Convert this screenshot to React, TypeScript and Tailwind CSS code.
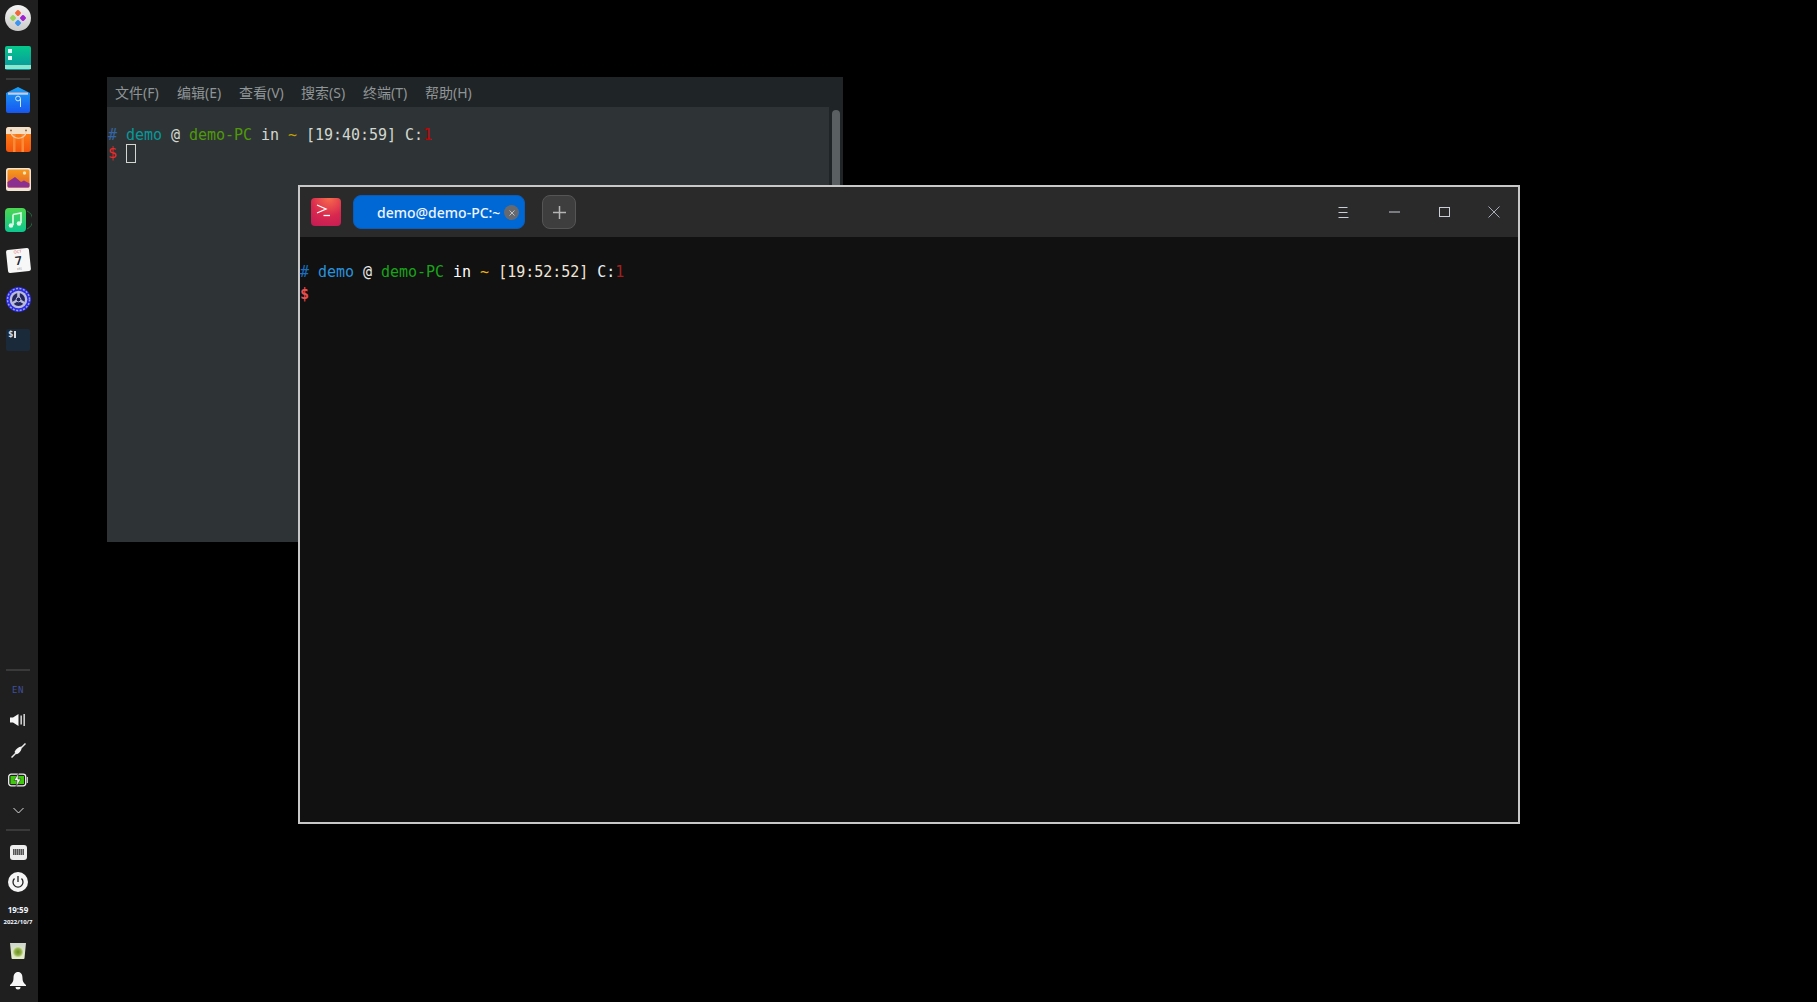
import type { ReactNode } from 'react'

const sans = 'font-["Noto_Sans","Noto_Sans_CJK_SC",sans-serif]'
const mono = 'font-["DejaVu_Sans_Mono",monospace]'

function Slot({ h, children }: { h: string; children: ReactNode }) {
  return <div className={`${h} flex w-full items-center justify-center`}>{children}</div>
}

function Launcher() {
  return (
    <svg width="26" height="26" viewBox="0 0 26 26">
      <defs>
        <linearGradient id="launcher" x1="0" y1="0" x2="0" y2="1">
          <stop offset="0" stopColor="#f4f4f4" />
          <stop offset="1" stopColor="#c9c9c9" />
        </linearGradient>
      </defs>
      <circle cx="13" cy="13" r="13" fill="url(#launcher)" />
      <rect x="10.5" y="5.5" width="5" height="5" rx="1.2" transform="rotate(45 13 8)" fill="#f0683a" />
      <rect x="5.5" y="10.5" width="5" height="5" rx="1.2" transform="rotate(45 8 13)" fill="#9ad35a" />
      <rect x="15.5" y="10.5" width="5" height="5" rx="1.2" transform="rotate(45 18 13)" fill="#a222d0" />
      <rect x="10.5" y="15.5" width="5" height="5" rx="1.2" transform="rotate(45 13 18)" fill="#3a94f0" />
    </svg>
  )
}

function FileTile() {
  return (
    <svg width="26" height="24" viewBox="0 0 26 24">
      <defs>
        <linearGradient id="tile" x1="0" y1="0" x2="0" y2="1">
          <stop offset="0" stopColor="#05c98a" />
          <stop offset="1" stopColor="#0a93a0" />
        </linearGradient>
      </defs>
      <rect width="26" height="24" rx="2" fill="url(#tile)" />
      <rect x="3" y="3" width="4" height="4" fill="#e8fff6" />
      <rect x="3" y="10" width="4" height="4" fill="#e8fff6" />
      <rect y="19" width="26" height="4" fill="#8ce6cc" />
    </svg>
  )
}

function StoreBag() {
  return (
    <svg width="24" height="26" viewBox="0 0 24 26">
      <defs>
        <linearGradient id="store" x1="0" y1="0" x2="0" y2="1">
          <stop offset="0" stopColor="#1aa0f5" />
          <stop offset="1" stopColor="#1756f0" />
        </linearGradient>
      </defs>
      <path d="M0 6 12 0l12 6v18a2 2 0 0 1-2 2H2a2 2 0 0 1-2-2z" fill="url(#store)" />
      <rect x="2" y="5.500" width="20" height="1" fill="#f4b8b8" />
      <rect x="2" y="6.500" width="20" height="1" fill="#f7f7ff" />
      <circle cx="12" cy="11.500" r="2.400" fill="none" stroke="#cfe6ff" strokeWidth="1" />
      <path d="M14.500 11.500V20" fill="none" stroke="#cfe6ff" strokeWidth="1" />
    </svg>
  )
}

function ShopBag() {
  return (
    <svg width="25" height="25" viewBox="0 0 25 25">
      <defs>
        <linearGradient id="shop" x1="0" y1="0" x2="0" y2="1">
          <stop offset="0" stopColor="#ff8a1a" />
          <stop offset="1" stopColor="#f3540c" />
        </linearGradient>
      </defs>
      <rect width="25" height="25" rx="3" fill="url(#shop)" />
      <path d="M0 7V3a3 3 0 0 1 3-3h19a3 3 0 0 1 3 3v4z" fill="#f3dfc8" />
      <rect x="7" y="7" width="2.500" height="18" fill="#fb8a38" />
      <rect x="15.500" y="7" width="2.500" height="18" fill="#fb8a38" />
      <circle cx="5" cy="3.500" r="1" fill="#8f6a4a" />
      <circle cx="20" cy="3.500" r="1" fill="#8f6a4a" />
      <path d="M5 4.500c0 9 15 9 15 0" fill="none" stroke="#f7cfa8" strokeWidth="1.200" />
    </svg>
  )
}

function Photos() {
  return (
    <svg width="25" height="23" viewBox="0 0 25 23">
      <defs>
        <linearGradient id="photo" x1="0" y1="0" x2="0" y2="1">
          <stop offset="0" stopColor="#f79a1c" />
          <stop offset="1" stopColor="#e0602a" />
        </linearGradient>
      </defs>
      <rect width="25" height="23" rx="2.500" fill="#f3e3d3" />
      <rect x="1.500" y="1.500" width="22" height="18" rx="1.500" fill="url(#photo)" />
      <circle cx="18.500" cy="5" r="1.700" fill="#ffe3b0" />
      <path d="M1.500 14 9 9l6 5 3-1.500 5.500 3v2.500a1.500 1.500 0 0 1-1.500 1.500H3a1.500 1.500 0 0 1-1.500-1.500z" fill="#8b2f90" />
    </svg>
  )
}

function Music() {
  return (
    <svg width="27" height="24" viewBox="0 0 27 24">
      <defs>
        <linearGradient id="music" x1="0" y1="0" x2="0" y2="1">
          <stop offset="0" stopColor="#4cd651" />
          <stop offset="1" stopColor="#0dc78f" />
        </linearGradient>
      </defs>
      <path d="M22 3a10 10 0 0 1 0 18" fill="none" stroke="#1f6f3c" strokeWidth="1" />
      <rect width="21" height="24" rx="4" fill="url(#music)" />
      <path d="M8 6.500 16 5v10M8 6.500V17" fill="none" stroke="#dffbe9" strokeWidth="1.600" />
      <circle cx="6" cy="17.500" r="2.300" fill="#dffbe9" />
      <circle cx="14" cy="15.500" r="2.300" fill="#dffbe9" />
    </svg>
  )
}

function CalendarTile() {
  return (
    <div className={`flex h-[23px] w-[23px] rotate-[-6deg] flex-col items-center rounded-[2px] bg-[#f7f7f7] ${sans}`}>
      <span className="text-[4px] leading-[6px] text-[#e06060]">OCT</span>
      <span className="text-[12px] font-semibold leading-[12px] text-[#1c2230]">7</span>
      <span className="text-[3px] leading-[4px] text-[#777]">FRI</span>
    </div>
  )
}

function Settings() {
  return (
    <svg width="25" height="25" viewBox="0 0 25 25">
      <circle cx="12.500" cy="12.500" r="12.500" fill="#2b2de0" />
      <circle cx="12.500" cy="12.500" r="11" fill="none" stroke="#9a9cf7" strokeWidth="1.500" strokeDasharray="2 1.500" />
      <circle cx="12.500" cy="12.500" r="8.800" fill="#b9bbd8" />
      <circle cx="12.500" cy="12.500" r="6.500" fill="#23265e" />
      <path d="M12.500 12.500V5M12.500 12.500 6 16.500M12.500 12.500l6.500 4" stroke="#b9bbd8" strokeWidth="2.600" />
      <circle cx="12.500" cy="12.500" r="2.400" fill="#23265e" stroke="#b9bbd8" strokeWidth="1" />
    </svg>
  )
}

function TerminalTile() {
  return (
    <div className={`relative h-[22px] w-[24px] rounded-[2px] bg-[#1b2a3a] ${mono}`}>
      <span className="absolute left-[2px] top-[1px] text-[9px] font-bold leading-[9px] text-[#d9dde2]">$</span>
      <span className="absolute left-[8px] top-[2px] h-[7px] w-[2px] bg-[#d9dde2]" />
    </div>
  )
}

function Volume() {
  return (
    <svg width="16" height="12" viewBox="0 0 16 12" fill="#f4f4f4">
      <path d="M0 3.500h3L8.500 0v12L3 8.500H0z" />
      <rect x="10.500" y="1.500" width="1.300" height="9" />
      <rect x="13.500" y="0" width="1.300" height="12" />
    </svg>
  )
}

function Pen() {
  return (
    <svg width="15" height="15" viewBox="0 0 15 15">
      <path d="M0.500 14.500 5 10" stroke="#e8e8e8" strokeWidth="1.500" />
      <path d="M3.500 9C5 5.800 7.500 4 10.500 3.500 11.200 6.500 9 10 5.500 11.200z" fill="#f4f4f4" />
      <path d="M10 5 14.500 0.500" stroke="#e8e8e8" strokeWidth="1.500" />
    </svg>
  )
}

function Battery() {
  return (
    <svg width="20" height="14" viewBox="0 0 20 14">
      <rect x="0.700" y="1.200" width="17" height="11.600" rx="2.500" fill="none" stroke="#f0f0f0" strokeWidth="1.300" />
      <rect x="2.500" y="3" width="13.500" height="8" fill="#3ec90c" />
      <path d="M10.500 0 6 7.500h3L8 14 13 6h-3z" fill="#f4f4f4" stroke="#1f1f1f" strokeWidth="0.500" />
      <rect x="18.800" y="4" width="1.200" height="6" fill="#c8c8c8" />
    </svg>
  )
}

function Chevron() {
  return (
    <svg width="11" height="7" viewBox="0 0 11 7">
      <path d="M0.500 1 5.500 6l5-5" fill="none" stroke="#dcdcdc" strokeWidth="1" />
    </svg>
  )
}

function Keyboard() {
  return (
    <div className="flex h-[15px] w-[17px] items-center justify-center rounded-[3px] bg-[#eeeeee]">
      <div className="h-[6px] w-[11px] bg-[repeating-linear-gradient(90deg,#555_0,#555_1px,#999_1px,#999_2px)]" />
    </div>
  )
}

function Power() {
  return (
    <svg width="20" height="20" viewBox="0 0 20 20">
      <circle cx="10" cy="10" r="10" fill="#f5f5f5" />
      <path d="M6.500 6.500a5 5 0 1 0 7 0" fill="none" stroke="#222" strokeWidth="1.300" />
      <path d="M10 4v6" stroke="#222" strokeWidth="1.300" />
    </svg>
  )
}

function Trash() {
  return (
    <svg width="16" height="16" viewBox="0 0 16 16">
      <defs>
        <linearGradient id="trash" x1="0" y1="0" x2="0" y2="1">
          <stop offset="0" stopColor="#cfd6cc" />
          <stop offset="1" stopColor="#e4efc8" />
        </linearGradient>
        <radialGradient id="trashGlow">
          <stop offset="0" stopColor="#6a8f22" />
          <stop offset="0.6" stopColor="#93b34a" />
          <stop offset="1" stopColor="#e0ebc2" />
        </radialGradient>
      </defs>
      <path d="M0 0h16l-1.500 15a1 1 0 0 1-1 1h-11a1 1 0 0 1-1-1z" fill="url(#trash)" />
      <circle cx="8" cy="9" r="5.500" fill="url(#trashGlow)" />
    </svg>
  )
}

function Bell() {
  return (
    <svg width="16" height="18" viewBox="0 0 16 18" fill="#f6f6f6">
      <path d="M8 0c3 0 4.500 2.500 4.500 6 0 3.500 1 5 3.500 7v1H0v-1c2.500-2 3.500-3.500 3.500-7C3.500 2.500 5 0 8 0z" />
      <path d="M5.500 15h5a2.500 2.500 0 0 1-5 0z" />
    </svg>
  )
}

function Dock() {
  return (
    <aside className="flex h-full w-[38px] shrink-0 flex-col items-center bg-[#1f1f1f] pr-[2px]">
      <Slot h="h-[36px]"><Launcher /></Slot>
      <Slot h="h-[42px] pt-[2px]"><FileTile /></Slot>
      <div className="h-[2px] w-[24px] shrink-0 bg-[#3a3a3a]" />
      <Slot h="h-[39px]"><StoreBag /></Slot>
      <Slot h="h-[41px]"><ShopBag /></Slot>
      <Slot h="h-[39px]"><Photos /></Slot>
      <Slot h="h-[42px]"><Music /></Slot>
      <Slot h="h-[38px]"><CalendarTile /></Slot>
      <Slot h="h-[41px]"><Settings /></Slot>
      <Slot h="h-[40px]"><TerminalTile /></Slot>

      <div className="mt-auto h-[2px] w-[24px] shrink-0 bg-[#3a3a3a]" />
      <Slot h="h-[34px] pt-[4px]">
        <span className={`text-[9px] leading-none tracking-[0.5px] text-[#3f4f9a] ${mono}`}>EN</span>
      </Slot>
      <Slot h="h-[30px]"><Volume /></Slot>
      <Slot h="h-[30px]"><Pen /></Slot>
      <Slot h="h-[30px]"><Battery /></Slot>
      <Slot h="h-[30px]"><Chevron /></Slot>
      <div className="mt-[4px] h-[2px] w-[24px] shrink-0 bg-[#3a3a3a]" />
      <Slot h="h-[42px]"><Keyboard /></Slot>
      <Slot h="h-[18px]"><Power /></Slot>
      <div className={`mt-[12px] flex flex-col items-center font-bold text-[#f2f6ff] ${sans}`}>
        <span className="text-[8px] leading-[13px]">19:59</span>
        <span className="whitespace-nowrap text-[6px] leading-[13px]">2022/10/7</span>
      </div>
      <Slot h="h-[38px] pt-[6px]"><Trash /></Slot>
      <Slot h="h-[28px]"><Bell /></Slot>
      <div className="h-[7px] shrink-0" />
    </aside>
  )
}

const backMenu = ['文件(F)', '编辑(E)', '查看(V)', '搜索(S)', '终端(T)', '帮助(H)']

function BackWindow() {
  return (
    <section className="absolute left-[107px] top-[77px] flex h-[465px] w-[736px] flex-col bg-[#2e3436]">
      <nav className={`flex h-[30px] shrink-0 items-center gap-[16px] bg-[#1f2426] pl-[8px] text-[14px] text-[#8f9496] ${sans}`}>
        {backMenu.map((item) => (
          <span key={item} className="w-[46px] whitespace-nowrap">{item}</span>
        ))}
      </nav>
      <div className="flex min-h-0 flex-1">
        <div className={`flex-1 pl-[1px] pt-[20px] text-[15px] leading-[17px] tracking-[-0.03px] text-[#d3d7cf] ${mono}`}>
          <div className="whitespace-pre">
            <span className="text-[#3465a4]"># </span>
            <span className="text-[#06989a]">demo</span> @ <span className="text-[#4e9a06]">demo-PC</span> in{' '}
            <span className="text-[#c4a000]">~</span> [19:40:59] C:<span className="text-[#cc0000]">1</span>
          </div>
          <div className="flex items-center whitespace-pre">
            <span className="text-[#ef2929]">$ </span>
            <span className="h-[19px] w-[10px] border border-[#d3d7cf]" />
          </div>
        </div>
        <div className="flex w-[14px] shrink-0 justify-center bg-[#1f2426] pt-[3px]">
          <div className="h-full w-[8px] rounded-t-full bg-[#5a6061]" />
        </div>
      </div>
    </section>
  )
}

function AppLogo() {
  return (
    <div className="flex h-[28px] w-[30px] shrink-0 items-start rounded-[4px] bg-[radial-gradient(circle_at_60%_0%,#f76b4b,#d9284f_55%,#c01a55)] pl-[5px] pt-[5px]">
      <svg width="16" height="15" viewBox="0 0 16 15" fill="none" stroke="#fff" strokeWidth="1.300">
        <path d="M1 2 10 6 1 10" />
        <path d="M7.500 12.500H14" />
      </svg>
    </div>
  )
}

function WindowControls() {
  return (
    <div className="ml-auto flex items-center text-[#c9ced8]">
      <button className="flex h-[50px] w-[50px] items-center justify-center">
        <svg width="11" height="11" viewBox="0 0 11 11" stroke="currentColor">
          <path d="M0.500 0.500h9M0.500 5.500h9M0.500 10.500h10" />
        </svg>
      </button>
      <button className="ml-[1px] flex h-[50px] w-[50px] items-center justify-center">
        <svg width="11" height="2" viewBox="0 0 11 2" stroke="currentColor">
          <path d="M0 1h11" />
        </svg>
      </button>
      <button className="flex h-[50px] w-[50px] items-center justify-center">
        <svg width="11" height="10" viewBox="0 0 11 10" fill="none" stroke="currentColor">
          <rect x="0.500" y="0.500" width="10" height="9" />
        </svg>
      </button>
      <button className="flex h-[50px] w-[49px] items-center justify-center">
        <svg width="12" height="12" viewBox="0 0 12 12" stroke="currentColor" strokeWidth="0.800">
          <path d="M0.500 0.500 11.500 11.500M11.500 0.500 0.500 11.500" />
        </svg>
      </button>
    </div>
  )
}

function FrontWindow() {
  return (
    <section className="absolute left-[298px] top-[185px] flex h-[639px] w-[1222px] flex-col border-2 border-[#c8c8c8] bg-[#111111]">
      <header className="flex h-[50px] shrink-0 items-center bg-[#2a2a2a] pl-[11px]">
        <AppLogo />
        <div className={`relative ml-[12px] flex h-[34px] w-[172px] items-center rounded-[8px] border border-[#0a5cb8] bg-[#0068d4] pl-[23px] text-[14px] font-medium text-[#eef4ff] ${sans}`}>
          <span className="whitespace-nowrap">demo@demo-PC:~</span>
          <span className="absolute right-[5px] top-[9px] flex h-[15px] w-[15px] items-center justify-center rounded-full bg-[#666a70]">
            <svg width="6" height="6" viewBox="0 0 6 6" stroke="#d8d8d8" strokeWidth="0.800">
              <path d="M0.500 0.500 5.500 5.500M5.500 0.500 0.500 5.500" />
            </svg>
          </span>
        </div>
        <button className="ml-[17px] flex h-[34px] w-[34px] items-center justify-center rounded-[8px] border border-[#555555] bg-[#3e3e3e]">
          <svg width="13" height="13" viewBox="0 0 13 13" stroke="#b5b5b5" strokeWidth="1.500">
            <path d="M6.500 0v13M0 6.500h13" />
          </svg>
        </button>
        <WindowControls />
      </header>
      <div className={`flex-1 pt-[24px] text-[15px] leading-[22px] tracking-[-0.03px] text-white ${mono}`}>
        <div className="whitespace-pre">
          <span className="text-[#1a6fc0]"># </span>
          <span className="text-[#2a92dc]">demo</span> <span className="text-[#e8e8e8]">@</span>{' '}
          <span className="text-[#19a319]">demo-PC</span> in <span className="text-[#f5b400]">~</span>{' '}
          <span className="text-[#f0e6d8]">[19:52:52]</span> <span className="text-[#e4eef6]">C:</span>
          <span className="text-[#a32020]">1</span>
        </div>
        <div className="font-bold text-[#e65050]">$</div>
      </div>
    </section>
  )
}

export default function App() {
  return (
    <div className="relative flex h-[1002px] w-[1817px] overflow-hidden bg-black">
      <Dock />
      <BackWindow />
      <FrontWindow />
    </div>
  )
}
